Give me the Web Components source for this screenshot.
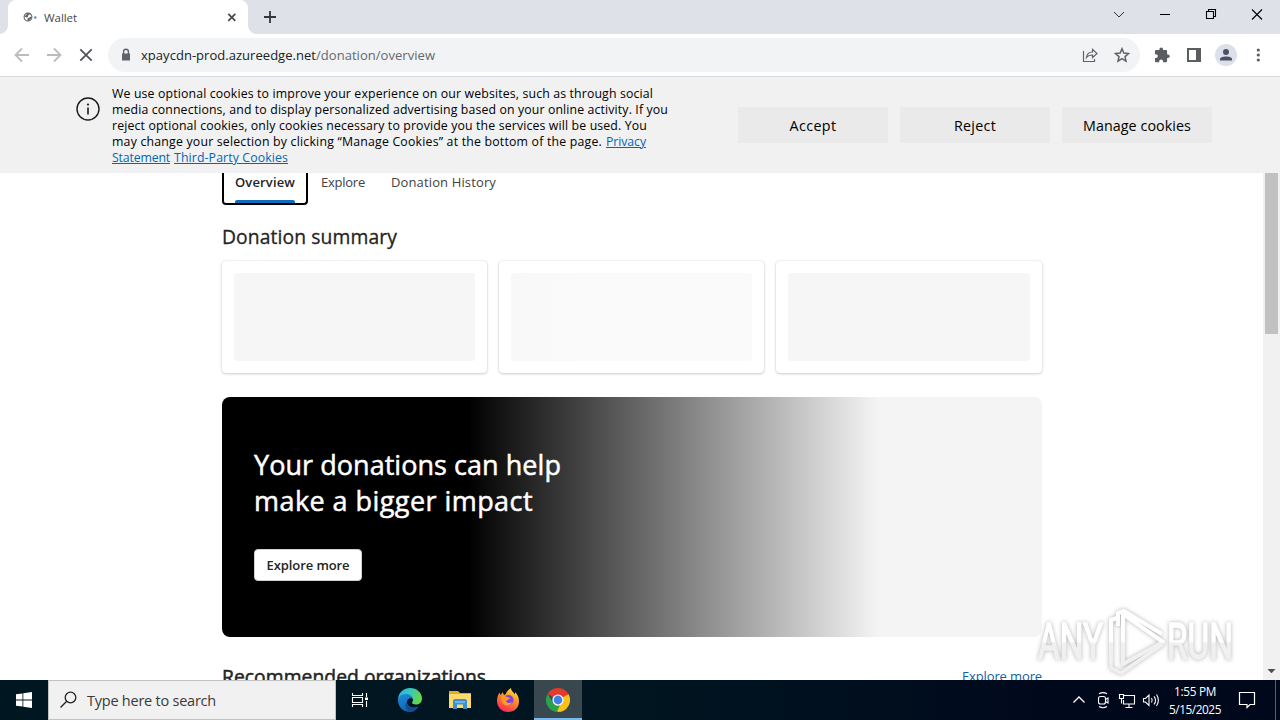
<!DOCTYPE html>
<html lang="en">
<head>
<meta charset="utf-8">
<title>Wallet</title>
<style>
    body {
        margin: 0;
        width: 1280px;
        height: 720px;
        overflow: hidden;
        background: #fff;
        font-family: "Open Sans", "Noto Sans", sans-serif;
    }
    desktop-screen { font-size: 13px; }
    a { --line: underline; color: #0067b8; }
</style>
</head>
<body>
<desktop-screen>
    <browser-tabs><fit-text w="33">Wallet</fit-text></browser-tabs>
    <browser-toolbar>
        <fit-text slot="host" w="175">xpaycdn-prod.azureedge.net</fit-text>
        <fit-text slot="path" w="119">/donation/overview</fit-text>
    </browser-toolbar>
    <cookie-banner>
        <div><fit-text w="541">We use optional cookies to improve your experience on our websites, such as through social</fit-text></div>
        <div><fit-text w="556">media connections, and to display personalized advertising based on your online activity. If you</fit-text></div>
        <div><fit-text w="535">reject optional cookies, only cookies necessary to provide you the services will be used. You</fit-text></div>
        <div><fit-text w="490">may change your selection by clicking “Manage Cookies” at the bottom of the page.</fit-text><a><fit-text w="40">Privacy</fit-text></a></div>
        <div><a><fit-text w="58">Statement</fit-text></a><a><fit-text w="114">Third-Party Cookies</fit-text></a></div>
        <cookie-button slot="actions"><fit-text w="47">Accept</fit-text></cookie-button>
        <cookie-button slot="actions"><fit-text w="42">Reject</fit-text></cookie-button>
        <cookie-button slot="actions"><fit-text w="108">Manage cookies</fit-text></cookie-button>
    </cookie-banner>
    <wallet-page>
        <wallet-tab slot="tabs" active><fit-text w="60">Overview</fit-text></wallet-tab>
        <wallet-tab slot="tabs"><fit-text w="44">Explore</fit-text></wallet-tab>
        <wallet-tab slot="tabs"><fit-text w="105">Donation History</fit-text></wallet-tab>
        <fit-text slot="title" w="175">Donation summary</fit-text>
        <summary-card slot="cards"></summary-card>
        <summary-card slot="cards" light></summary-card>
        <summary-card slot="cards"></summary-card>
        <impact-hero slot="hero">
            <div><fit-text w="307">Your donations can help</fit-text></div>
            <div><fit-text w="279">make a bigger impact</fit-text></div>
            <fit-text slot="button" w="83">Explore more</fit-text>
        </impact-hero>
        <fit-text slot="next" w="264">Recommended organizations</fit-text>
        <fit-text slot="link" w="80">Explore more</fit-text>
    </wallet-page>
    <task-bar>
        <fit-text slot="search" w="129">Type here to search</fit-text>
        <fit-text slot="time" w="42">1:55 PM</fit-text>
        <fit-text slot="date" w="52">5/15/2025</fit-text>
    </task-bar>
    <any-watermark></any-watermark>
</desktop-screen>

<script>
function define(name, html, setup) {
    const template = document.createElement('template');
    template.innerHTML = html;

    customElements.define(name, class extends HTMLElement {
        constructor() {
            super();
            this.attachShadow({ mode: 'open' });
            this.shadowRoot.appendChild(template.content.cloneNode(true));
        }
        connectedCallback() {
            if (setup) setup(this);
        }
    });
}

define('desktop-screen', `
    <style>
        :host {
            position: relative;
            display: grid;
            grid-template-rows: 34px 42px 97px 507px 40px;
            width: 1280px;
            height: 720px;
            overflow: hidden;
        }
    </style>
    <slot></slot>
`);

define('browser-tabs', `
    <style>
        :host { display: flex; background: #dee1e8; }
        .tab {
            display: flex;
            align-items: center;
            box-sizing: border-box;
            width: 240px;
            padding: 0 10px 0 15px;
            background: #fff;
            border-radius: 8px 8px 0 0;
            font-size: 11.5px;
            color: #45484d;
        }
        .tab svg:first-child { margin-right: 6px; }
        .tab svg:last-child { margin-left: auto; }
        .foot { width: 8px; height: 8px; align-self: flex-end; background: radial-gradient(circle at 100% 0, transparent 7.5px, #fff 8px); }
        .foot.l { background: radial-gradient(circle at 0 0, transparent 7.5px, #fff 8px); }
        .plus { margin: 9px 0 0 5px; }
        .win { display: flex; margin: 0 0 0 auto; height: 28px; align-items: center; }
        .win svg { width: 46px; height: 28px; }
    </style>
    <div class="foot l"></div>
    <div class="tab">
        <svg width="15" height="12" viewBox="0 0 15 12">
            <circle cx="5" cy="6" r="3.900" fill="#fff" stroke="#5f6368" stroke-width="1.100"/>
            <path d="M1.500 5.500L4 3l2-.8.8 1.300L5 4.500 5 6 3.500 6.500zM4.500 7.500L8 5.500l.5 1.500L6 9.500 4.500 9z" fill="#5f6368"/>
            <circle cx="12.300" cy="6.500" r="1.200" fill="#4688d8"/>
        </svg>
        <slot></slot>
        <svg width="12" height="12" viewBox="0 0 12 12"><path d="M2.3 2.8l7 7M9.3 2.8l-7 7" stroke="#45484d" stroke-width="1.7"/></svg>
    </div>
    <div class="foot"></div>
    <svg class="plus" width="18" height="16" viewBox="0 0 18 16"><path d="M3 8h12M9 2v12" stroke="#33363b" stroke-width="1.8"/></svg>
    <div class="win">
        <svg viewBox="0 0 46 28"><path d="M18 12l5 5 5-5" fill="none" stroke="#333"/></svg>
        <svg viewBox="0 0 46 28"><path d="M18 14.5h10" stroke="#000"/></svg>
        <svg viewBox="0 0 46 28"><path d="M18.5 11.5h7v7h-7zM20.5 11.500v-2h7v7h-2" fill="none" stroke="#000" stroke-width="1.1"/></svg>
        <svg viewBox="0 0 46 28"><path d="M18 9.500l10 10M28 9.500l-10 10" stroke="#000" stroke-width="1.1"/></svg>
    </div>
`);

define('browser-toolbar', `
    <style>
        :host { display: flex; align-items: center; background: #fff; font-size: 13px; }
        .nav { display: flex; width: 108px; box-sizing: border-box; padding-left: 12px; gap: 12px; }
        .box {
            display: flex;
            align-items: center;
            width: 1032px;
            height: 34px;
            box-sizing: border-box;
            padding: 0 8px 0 10px;
            background: #f1f3f5;
            border-radius: 17px;
            color: #202124;
        }
        .lock { margin-right: 7px; }
        .path { color: #65696e; }
        .share { margin-left: auto; margin-right: 12px; }
        .right { display: flex; align-items: center; padding-left: 10px; gap: 8px; }
        .right svg { display: block; }
    </style>
    <div class="nav">
        <svg width="20" height="20" viewBox="0 0 20 20"><path d="M17 10H4M10 3.500L3.500 10l6.500 6.500" fill="none" stroke="#babcbe" stroke-width="1.8"/></svg>
        <svg width="20" height="20" viewBox="0 0 20 20"><path d="M3 10h13M10 3.500l6.500 6.500-6.500 6.500" fill="none" stroke="#babcbe" stroke-width="1.8"/></svg>
        <svg width="20" height="20" viewBox="0 0 20 20"><path d="M4.300 4.300l11.400 11.400M15.700 4.300L4.300 15.700" stroke="#505357" stroke-width="1.8"/></svg>
    </div>
    <div class="box">
        <svg class="lock" width="16" height="16" viewBox="0 0 16 16"><path d="M4 6.500h8V13.500H4z" fill="#5f6368"/><path d="M5.600 7V4.600a2.400 2.400 0 0 1 4.800 0V7" fill="none" stroke="#5f6368" stroke-width="1.4"/></svg>
        <slot name="host"></slot><span class="path"><slot name="path"></slot></span>
        <svg class="share" width="20" height="20" viewBox="0 0 20 20"><path d="M3.500 6v10.500h11V14M6.500 12.500c.5-4 3-5.500 6-5.500V4.300L17 8.500l-4.500 4.200V10c-2.500 0-4.500.5-6 2.500z" fill="none" stroke="#5f6368" stroke-width="1.200"/></svg>
        <svg width="20" height="20" viewBox="0 0 20 20"><path d="M10 3.800l1.800 4.300 4.700.4-3.500 3.100 1 4.500-4-2.400-4 2.400 1-4.500-3.500-3.100 4.700-.4z" fill="none" stroke="#5f6368" stroke-width="1.500"/></svg>
    </div>
    <div class="right">
        <svg width="24" height="24" viewBox="0 0 24 24"><path d="M18 11.500h-.9V8.300c0-.8-.5-1.300-1.300-1.300H13V6.300a1.800 1.800 0 0 0-3.600 0V7H6.300C5.500 7 5 7.500 5 8.300v2.900h.9a1.900 1.900 0 0 1 0 3.800H5v2.900c0 .8.500 1.300 1.300 1.300h2.900v-.9a1.900 1.900 0 0 1 3.800 0v.9h2.800c.8 0 1.300-.5 1.300-1.300V15h.9a1.750 1.750 0 0 0 0-3.500z" fill="#5a5e63"/></svg>
        <svg width="24" height="24" viewBox="0 0 24 24"><path d="M5 5h14v14H5zM7 7v10h7V7z" fill="#5a5e63" fill-rule="evenodd"/></svg>
        <svg width="24" height="24" viewBox="0 0 24 24"><circle cx="12" cy="12" r="11" fill="#dde0e9"/><circle cx="12" cy="9" r="3" fill="#4b5066"/><path d="M6 17.500v-1.500c0-3.500 12-3.500 12 0v1.500z" fill="#4b5066"/></svg>
        <svg width="24" height="24" viewBox="0 0 24 24" fill="#5a5e63"><circle cx="12.300" cy="7" r="1.600"/><circle cx="12.300" cy="12" r="1.600"/><circle cx="12.300" cy="17" r="1.600"/></svg>
    </div>
`);

define('cookie-banner', `
    <style>
        :host {
            display: flex;
            box-sizing: border-box;
            padding: 9px 0 0 76px;
            background: #f1f1f1;
            border-top: 1px solid #d9d9da;
            color: #000;
            font-size: 12.300px;
            line-height: 16px;
        }
        .info { margin: 11px 12px 0 0; flex: none; }
        .text { width: 626px; }
        ::slotted(div) { display: flex; gap: 4px; height: 16px; }
        .actions { display: flex; gap: 12px; margin-top: 21px; }
    </style>
    <svg class="info" width="24" height="24" viewBox="0 0 24 24"><circle cx="12" cy="12" r="11" fill="none" stroke="#1b1b1b" stroke-width="1.400"/><path d="M12 10.500v7" stroke="#1b1b1b" stroke-width="1.600"/><circle cx="12" cy="7.500" r="1.100" fill="#1b1b1b"/></svg>
    <div class="text"><slot></slot></div>
    <div class="actions"><slot name="actions"></slot></div>
`);

define('cookie-button', `
    <style>
        :host {
            display: flex;
            align-items: center;
            justify-content: center;
            box-sizing: border-box;
            width: 150px;
            height: 36px;
            padding-top: 2px;
            background: #eaeaea;
            font-size: 14.300px;
        }
    </style>
    <slot></slot>
`);

define('wallet-page', `
    <style>
        :host { display: flex; overflow: hidden; background: #fff; color: #242424; }
        .content { width: 820px; height: 507px; margin: 0 221px 0 222px; flex: none; }
        .tabs { display: flex; height: 32px; }
        h2 { margin: 0; font-weight: 400; font-size: 19.300px; line-height: 28px; color: #242424; -webkit-text-stroke: .3px; }
        .title { margin-top: 18px; }
        .cards { display: grid; grid-template-columns: 265px 265px 266px; gap: 12px; margin: 10px 0 24px; }
        .next { display: flex; justify-content: space-between; margin-top: 26px; }
        .next h2 { -webkit-text-stroke: .5px; }
        .link { color: #115ea3; font-size: 13px; line-height: 26px; }
        .bar { width: 17px; height: 507px; background: #f1f1f1; display: flex; flex-direction: column; justify-content: space-between; align-items: center; }
        .thumb { width: 13px; height: 161px; background: #c1c1c1; }
    </style>
    <div class="content">
        <div class="tabs"><slot name="tabs"></slot></div>
        <h2 class="title"><slot name="title"></slot></h2>
        <div class="cards"><slot name="cards"></slot></div>
        <slot name="hero"></slot>
        <div class="next"><h2><slot name="next"></slot></h2><span class="link"><slot name="link"></slot></span></div>
    </div>
    <div class="bar">
        <div class="thumb"></div>
        <svg width="17" height="17" viewBox="0 0 17 17"><path d="M4.500 6h8l-4 4.300z" fill="#505050"/></svg>
    </div>
`);

define('wallet-tab', `
    <style>
        :host {
            display: flex;
            flex-direction: column;
            box-sizing: border-box;
            height: 32px;
            padding: 0 13px;
            font-size: 13px;
            line-height: 19px;
            color: #424242;
        }
        :host([active]) {
            border: 2px solid #000;
            border-top: none;
            border-radius: 0 0 4px 4px;
            padding: 0 11px;
            font-weight: 600;
            color: #242424;
        }
        .line { display: none; height: 3px; margin-top: auto; border-radius: 2px 2px 0 0; background: #0f6cbd; }
        :host([active]) .line { display: block; }
    </style>
    <slot></slot>
    <div class="line"></div>
`);

define('summary-card', `
    <style>
        :host {
            display: block;
            box-sizing: border-box;
            height: 112px;
            padding: 12px;
            border-radius: 4px;
            background: #fff;
            box-shadow: 0 0 2px rgba(0, 0, 0, .14), 0 1px 3px rgba(0, 0, 0, .17);
        }
        div { height: 88px; border-radius: 3px; background: #f6f6f6; }
        :host([light]) div { background: linear-gradient(90deg, #f8f8f8, #fafafa 30%); }
    </style>
    <div></div>
`);

define('impact-hero', `
    <style>
        :host {
            display: block;
            box-sizing: border-box;
            height: 240px;
            padding: 50px 32px 0;
            border-radius: 8px;
            background: linear-gradient(90deg, #000 30%, #f4f4f4 80%);
            color: #fff;
            font-size: 27px;
            line-height: 36px;
            -webkit-text-stroke: .5px;
        }
        .button {
            display: flex;
            align-items: center;
            justify-content: center;
            box-sizing: border-box;
            width: 108px;
            height: 32px;
            margin-top: 30px;
            border: 1px solid #d1d1d1;
            border-radius: 4px;
            background: #fff;
            color: #242424;
            font-size: 13px;
            font-weight: 600;
            -webkit-text-stroke: 0;
        }
    </style>
    <slot></slot>
    <div class="button"><slot name="button"></slot></div>
`);

define('task-bar', `
    <style>
        :host { display: flex; background: linear-gradient(90deg, #001721, #001520 50%, #00081c 85%); color: #fff; }
        .start, .app { display: flex; align-items: center; justify-content: center; width: 48px; height: 40px; }
        .app { width: 49px; }
        .app.view { width: 47px; }
        .edge { width: 54px; }
        .search {
            display: flex;
            align-items: center;
            box-sizing: border-box;
            width: 288px;
            height: 40px;
            padding-left: 10px;
            background: #f1f1f1;
            border: 1px solid #bfc2c3;
            color: #3a3a3a;
            font-size: 14.500px;
        }
        .search svg { margin-right: 8px; }
        .active { box-sizing: border-box; width: 48px; background: #39474f; border-bottom: 2px solid #76b9ed; padding-top: 2px; }
        .tray { display: flex; align-items: center; margin-left: auto; }
        .tray > svg { width: 24px; height: 24px; }
        .clock { display: flex; flex-direction: column; align-items: center; width: 64px; font-size: 11.800px; line-height: 18px; }
        .tray .note { width: 40px; }
        .peek { width: 1px; height: 40px; margin: 0 4px 0 8px; background: #54606b; }
    </style>
    <div class="start"><svg width="16" height="16" viewBox="0 0 16 16" fill="#fff"><path d="M0 2.300l6.500-.9v6.200H0zM7.300 1.300L16 0v7.600H7.300zM0 8.400h6.500v6.200L0 13.700zM7.300 8.400H16V16l-8.700-1.300z"/></svg></div>
    <div class="search">
        <svg width="20" height="20" viewBox="0 0 20 20"><circle cx="11.500" cy="7.500" r="5.300" fill="none" stroke="#222" stroke-width="1.300"/><path d="M7.700 11.300L1.500 17.500" stroke="#222" stroke-width="1.300"/></svg>
        <slot name="search"></slot>
    </div>
    <div class="app view"><svg width="18" height="18" viewBox="0 0 18 18" fill="none" stroke="#fff" stroke-width="1.100"><path d="M1.500 2v2.500h10V2M1.500 6.500h10v5h-10zM1.500 16v-2.500h10V16M15.500 2v4M15.500 10v6"/><path d="M14 6.500h3v2.500h-3z" fill="#fff" stroke="none"/></svg></div>
    <div class="app edge"><svg width="26" height="26" viewBox="0 0 26 26">
        <defs>
            <linearGradient id="e1" x1="0" y1="0" x2="1" y2=".3"><stop offset="0" stop-color="#2aaee8"/><stop offset=".5" stop-color="#36c7c3"/><stop offset="1" stop-color="#63d84c"/></linearGradient>
            <linearGradient id="e2" x1="0" y1="0" x2=".5" y2="1"><stop offset="0" stop-color="#1b8fd9"/><stop offset="1" stop-color="#1160b5"/></linearGradient>
        </defs>
        <path d="M1 13C1 6 6 1 13 1s12 5 12 10.500c0 4-3 6-6 6-2.500 0-4-.8-4-2 0-.8 1-1 1-2.500 0-2.500-2.500-4.500-6-4.500S2 10 1 13z" fill="url(#e1)"/>
        <path d="M1 13c0-3 3-6 8-6 4 0 7 2.500 7 5.500-1-1.800-5.500-2-6 2-.5 4.500 5 7.500 11.500 5C19.500 23 16.500 25 13 25 6 25 1 20 1 13z" fill="url(#e2)"/>
        <path d="M10 14.500c-.5 4.500 5 7.500 11.500 5-2 3.500-5 5.500-8.500 5.500-6-2-6-10 0-12.500-1.500.2-2.800.8-3 2z" fill="#164a91"/>
    </svg></div>
    <div class="app" style="width: 45px"><svg width="24" height="22" viewBox="0 0 24 22"><path d="M1 2h9l2 2h11v15H1z" fill="#e9a928"/><path d="M1 5h22v14H1z" fill="#ffd96b"/><path d="M5 20v-8.500l1.500-1.500h11l1.500 1.500V20h-4v-4.500H9V20z" fill="#3c8fd0"/><path d="M7 12h10v2H7z" fill="#67b5e9"/></svg></div>
    <div class="app" style="width: 52px"><svg width="24" height="26" viewBox="0 0 24 26">
        <defs>
            <linearGradient id="f1" x1=".8" y1="0" x2=".3" y2="1"><stop offset="0" stop-color="#fff04a"/><stop offset=".4" stop-color="#ff9624"/><stop offset="1" stop-color="#f5265b"/></linearGradient>
        </defs>
        <path d="M1 14C1 10 2 8 3.500 5.500L4.500 8 7 5c0 1.500.5 2.500 2 3 1.500-3 3-5 6-7 0 3 2.500 4 4 6.500V5c3 3 4 6 4 9.500C23 21 18 25 12 25S1 20.500 1 14z" fill="url(#f1)"/>
        <circle cx="12.500" cy="13" r="5" fill="#8042dc"/>
        <path d="M5 10c2-1.500 4-1.500 6 0l3 1c-1 2-3 1.500-4 3 1 2.500 4 2.500 6 1-1 4-8 5-10 0z" fill="#ff9a24"/>
    </svg></div>
    <div class="app active"><svg width="24" height="24" viewBox="0 0 24 24">
        <path d="M12 12L1.600 6A12 12 0 0 1 22.400 6z" fill="#e33b2e"/>
        <path d="M12 12L22.400 6A12 12 0 0 1 12 24z" fill="#fbc116"/>
        <path d="M12 24A12 12 0 0 1 1.600 6L7.300 15z" fill="#2aa14c"/>
        <path d="M12 24l5-9-9 0-1 .5z" fill="#fbc116"/><path d="M7.300 14.700A5.400 5.400 0 0 0 14 17.200L10.500 24 5 20z" fill="#2aa14c"/>
        <path d="M12 6.500h10.700l-.5-1H12z" fill="#e33b2e"/>
        <circle cx="12" cy="12" r="5.600" fill="#fff"/><circle cx="12" cy="12" r="4.400" fill="#3f80ea"/>
    </svg></div>
    <div class="tray">
        <svg viewBox="0 0 24 24"><path d="M6.500 14.500l5.500-5.500 5.500 5.500" fill="none" stroke="#fff" stroke-width="1.300"/></svg>
        <svg viewBox="0 0 24 24" fill="none" stroke="#fff" stroke-width="1.100"><rect x="7.500" y="8.500" width="7" height="7.500" rx="2"/><path d="M14.500 11.500l2.500-1.500v5l-2.500-1.500M8 5.800c2.500-1.500 5.500-1.500 8 0M8 18.500c2.500 1.500 5.500 1.500 8 0"/></svg>
        <svg viewBox="0 0 24 24" fill="none" stroke="#fff" stroke-width="1.100"><path d="M9 7.500h10.500v8.500H8.500v-4M14 16v3M10.500 19.500h7M4.500 6.500h4v4h-4zM6.500 10.500v5"/></svg>
        <svg viewBox="0 0 24 24" fill="none" stroke="#fff" stroke-width="1.100"><path d="M4.500 10.500h2l3.500-3.500v10.500l-3.500-3.500h-2zM12.500 10c1 1.500 1 3 0 4.500M15 8.300c1.800 2.300 1.800 5.700 0 8M17.500 6.500c2.500 3.300 2.500 8.200 0 11.500"/></svg>
        <div class="clock"><slot name="time"></slot><slot name="date"></slot></div>
        <svg class="note" viewBox="0 0 40 24"><path d="M12.500 4.500h15v12h-4.500l-3 3v-3h-7.500z" fill="none" stroke="#fff" stroke-width="1.200"/></svg>
        <div class="peek"></div>
    </div>
`);

define('any-watermark', `
    <style>
        :host { position: absolute; left: 1030px; top: 602px; width: 210px; height: 76px; }
        svg { display: block; overflow: visible; filter: drop-shadow(0 0 2px rgba(0, 0, 0, .3)); }
        text { font-family: Roboto, sans-serif; font-size: 50px; stroke-width: 1.500px; }
    </style>
    <svg width="210" height="76" viewBox="0 0 210 76">
        <defs><linearGradient id="w" x1="0" y1="0" x2="0" y2="76" gradientUnits="userSpaceOnUse"><stop offset=".52" stop-color="#fff"/><stop offset=".54" stop-color="#f0f0f0"/></linearGradient></defs>
        <g fill="url(#w)" stroke="url(#w)">
            <text x="8" y="57" textLength="65" lengthAdjust="spacingAndGlyphs">ANY</text>
            <text x="137" y="57" textLength="66" lengthAdjust="spacingAndGlyphs">RUN</text>
        </g>
        <g fill="none" stroke="url(#w)" stroke-width="4" stroke-linejoin="round">
            <path d="M88 24V11l6-2 38 23M93 12v50l40-22-40-28"/>
            <path d="M81 60V18l6-2"/>
            <path d="M81 60v6l10 5 42-29" stroke-width="3.500"/>
        </g>
    </svg>
`);

// Single line of text, tracked so that it fills the width in "w".
define('fit-text', `
    <style>
        :host { display: inline-block; white-space: nowrap; }
        span { display: inline-block; text-decoration: var(--line, none); }
    </style>
    <span><slot></slot></span>
`, (el) => {
    const width = Number(el.getAttribute('w'));
    const natural = el.shadowRoot.querySelector('span').getBoundingClientRect().width;
    el.style.letterSpacing = (width - natural) / el.textContent.length + 'px';
});
</script>
</body>
</html>
